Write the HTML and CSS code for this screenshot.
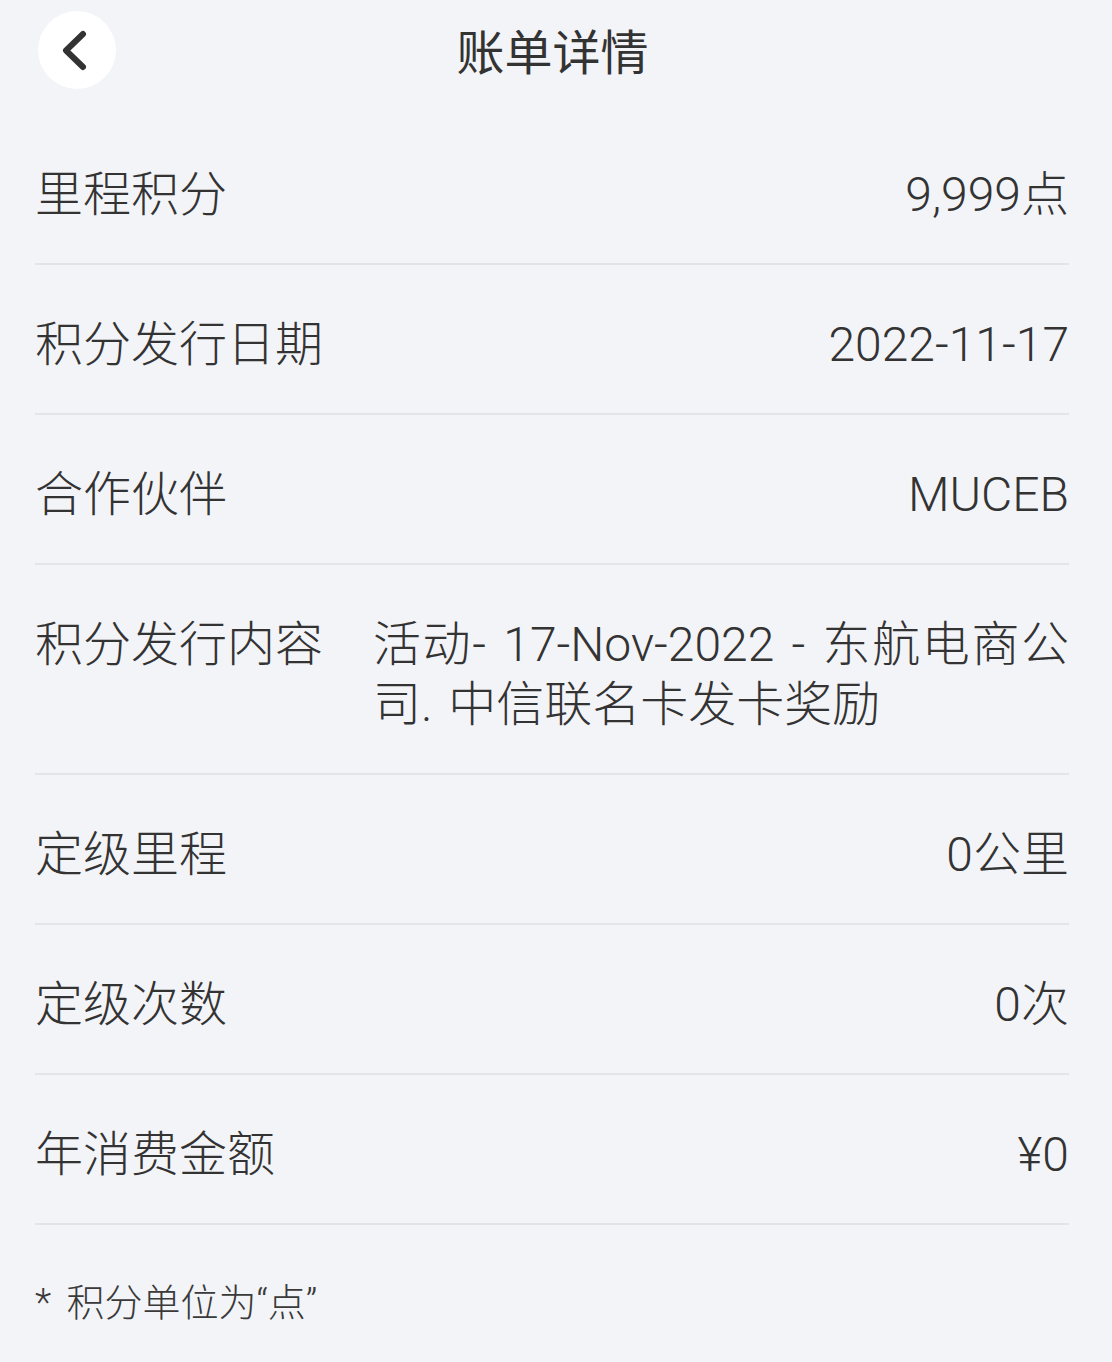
FILE: index.html
```html
<!DOCTYPE html>
<html lang="zh-CN">
<head>
    <meta charset="UTF-8">
    <meta name="viewport" content="width=device-width, initial-scale=1.0">
    <title>账单详情</title>
    <link rel="stylesheet" href="styles.css">
</head>
<body>
    <div class="cabecalho">
        <div class="voltar">
            <svg width="78" height="78" viewBox="0 0 78 78">
                <polyline points="45,23 28,39.5 45,56" fill="none" stroke="#333" stroke-width="6" stroke-linecap="round" stroke-linejoin="round"/>
            </svg>
        </div>
        <h1 class="titulo">账单详情</h1>
    </div>
    <ul class="detalhes">
        <li class="linha">
            <span class="rotulo">里程积分</span>
            <span class="valor">9,999点</span>
        </li>
        <li class="linha">
            <span class="rotulo">积分发行日期</span>
            <span class="valor">2022-11-17</span>
        </li>
        <li class="linha">
            <span class="rotulo">合作伙伴</span>
            <span class="valor">MUCEB</span>
        </li>
        <li class="linha">
            <span class="rotulo">积分发行内容</span>
            <span class="valor valor-longo">活动- 17-Nov-2022 - 东航电商公司. 中信联名卡发卡奖励</span>
        </li>
        <li class="linha">
            <span class="rotulo">定级里程</span>
            <span class="valor">0公里</span>
        </li>
        <li class="linha">
            <span class="rotulo">定级次数</span>
            <span class="valor">0次</span>
        </li>
        <li class="linha">
            <span class="rotulo">年消费金额</span>
            <span class="valor">¥0</span>
        </li>
    </ul>
    <p class="nota">* 积分单位为“点”</p>
</body>
</html>
```
FILE: styles.css
```css
body {
    margin: 0;
    background-color: #f3f4f8;
    color: #333;
    font-family: Roboto, "Noto Sans CJK SC", sans-serif;
}
div.cabecalho {
    display: grid;
    grid-template-columns: 78px 1fr 78px;
    align-items: start;
    height: 115px;
    box-sizing: border-box;
    padding: 11px 45px 0 38px;
}
div.voltar {
    width: 78px;
    height: 78px;
    border-radius: 50%;
    background-color: #fff;
}
div.voltar svg {
    display: block;
}
h1.titulo {
    margin: 0;
    padding-top: 4px;
    font-size: 48px;
    font-weight: 400;
    line-height: 78px;
    text-align: center;
}
ul.detalhes {
    list-style: none;
    margin: 0;
    padding: 0 43px 0 35px;
}
li.linha {
    display: flex;
    align-items: flex-start;
    padding: 50px 0 38px;
    border-bottom: 2px solid #e4e4e8;
    font-size: 48px;
    font-weight: 300;
    line-height: 60px;
}
span.rotulo {
    flex-shrink: 0;
}
span.valor {
    flex: 1;
    margin-left: 50px;
    text-align: right;
}
span.valor-longo {
    text-align: justify;
    word-spacing: 4px;
}
p.nota {
    margin: 0;
    padding: 53px 35px 0;
    font-size: 38px;
    font-weight: 300;
    line-height: 50px;
    color: #3a3a3a;
    word-spacing: 6px;
}
```
